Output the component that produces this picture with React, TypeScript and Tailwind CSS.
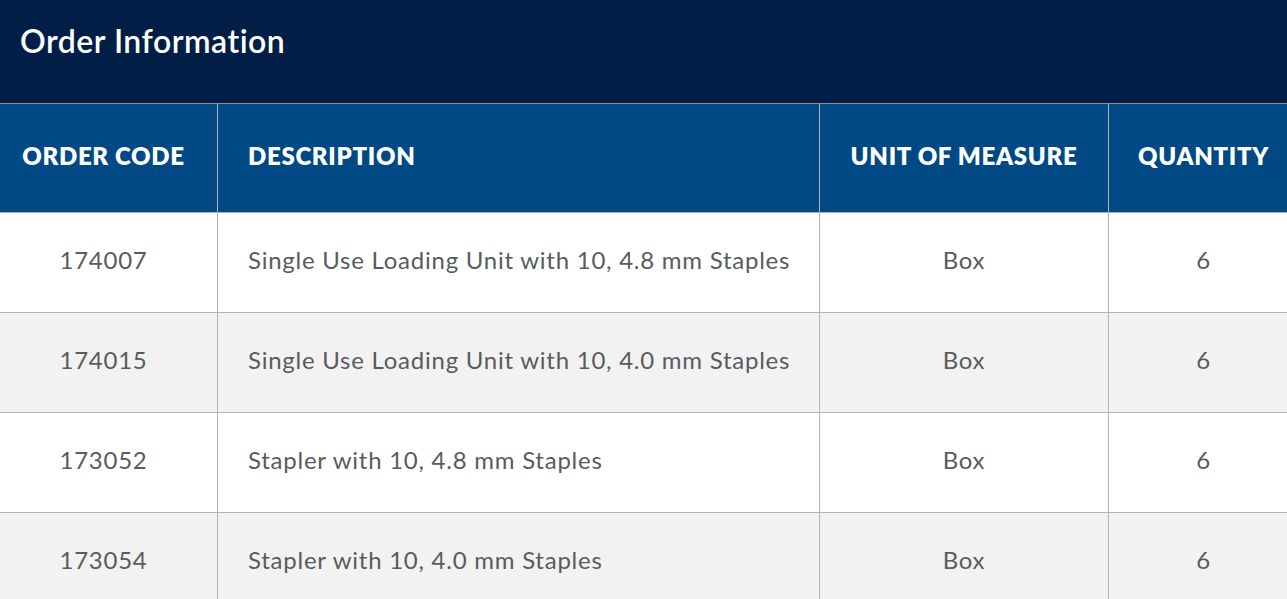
import React from "react";

const rows = [
  { code: "174007", desc: "Single Use Loading Unit with 10, 4.8 mm Staples" },
  { code: "174015", desc: "Single Use Loading Unit with 10, 4.0 mm Staples" },
  { code: "173052", desc: "Stapler with 10, 4.8 mm Staples" },
  { code: "173054", desc: "Stapler with 10, 4.0 mm Staples" },
];

export default function App() {
  return (
    <div className="w-[1287px] h-[599px] overflow-hidden bg-white" style={{ fontFamily: "Lato, 'Noto Sans', sans-serif" }}>
      <div className="h-[104px] bg-[#001e46] border-b border-[#8c8c8c] flex items-start pt-[21px] px-[20px]">
        <h1 className="text-white text-[32px] font-semibold tracking-[0.5px] leading-[40px]">Order Information</h1>
      </div>
      <div className="grid grid-cols-[218px_602px_289px_1fr] h-[109px] bg-[#004985] border-b border-[#b3b3b3] text-white font-extrabold text-[24px] tracking-[0.7px]">
        <div className="border-r border-[#b3b3b3] flex items-center justify-center pr-[10px] pb-[4px]">ORDER CODE</div>
        <div className="border-r border-[#b3b3b3] flex items-center pl-[30px] pb-[4px]">DESCRIPTION</div>
        <div className="border-r border-[#b3b3b3] flex items-center justify-center pb-[4px]">UNIT OF MEASURE</div>
        <div className="flex items-center justify-center pl-[11px] pb-[4px]">QUANTITY</div>
      </div>
      {rows.map((r, i) => (
        <div
          key={r.code}
          className={`grid grid-cols-[218px_602px_289px_1fr] h-[100px] border-b border-[#b3b3b3] text-[#5a5b5d] text-[24px] tracking-[0.75px] ${i % 2 === 1 ? "bg-[#f2f2f2]" : "bg-white"}`}
        >
          <div className="border-r border-[#b3b3b3] flex items-center justify-center pr-[10px] pb-[5px]">{r.code}</div>
          <div className="border-r border-[#b3b3b3] flex items-center pl-[30px] pb-[5px]">{r.desc}</div>
          <div className="border-r border-[#b3b3b3] flex items-center justify-center pb-[5px]">Box</div>
          <div className="flex items-center justify-center pl-[11px] pb-[5px]">6</div>
        </div>
      ))}
    </div>
  );
}
